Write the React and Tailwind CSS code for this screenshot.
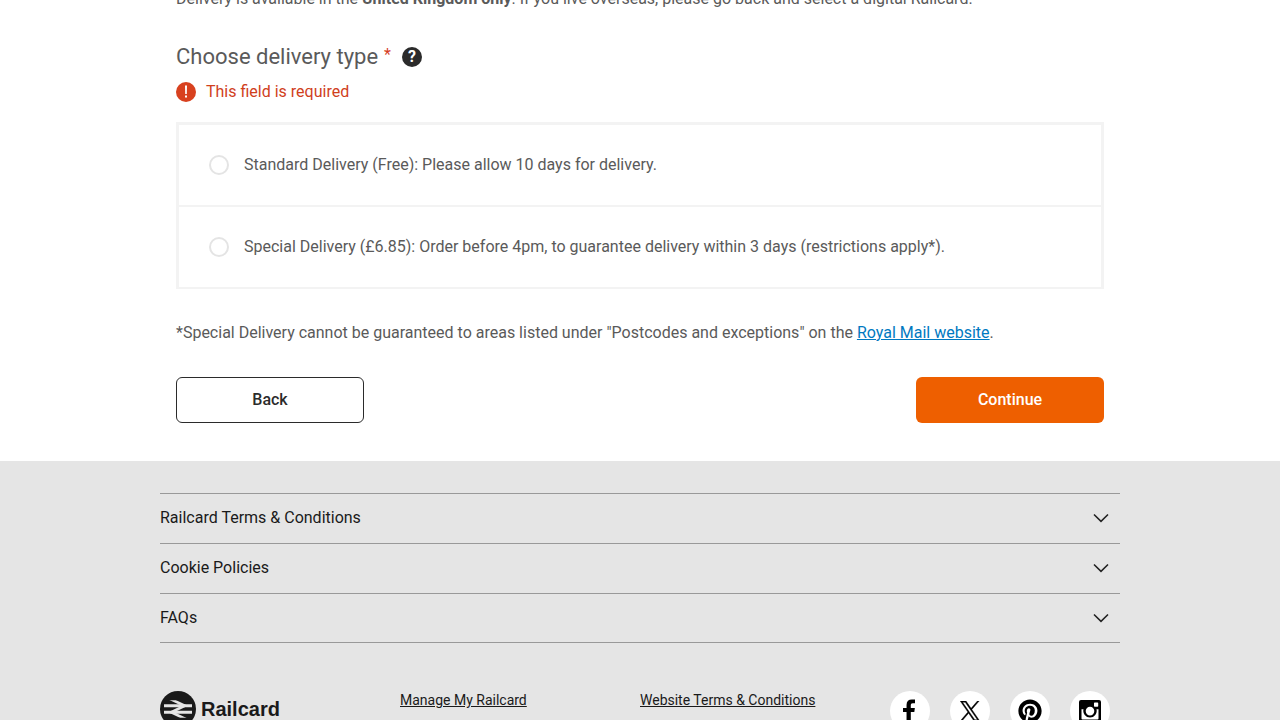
import React from "react";
import { FaPinterest } from "react-icons/fa6";

const deliveryOptions = [
  { id: "standard", label: "Standard Delivery (Free): Please allow 10 days for delivery." },
  {
    id: "special",
    label:
      "Special Delivery (£6.85): Order before 4pm, to guarantee delivery within 3 days (restrictions apply*).",
  },
];

const footerSections = ["Railcard Terms & Conditions", "Cookie Policies", "FAQs"];

function FacebookIcon() {
  return (
    <svg viewBox="95 0 864 1664" className="mr-[2px] h-6 w-3" aria-hidden="true">
      <path
        fill="currentColor"
        d="M959 12v264h-157q-86 0-116 36t-30 108v189h293l-39 296h-254v759h-306v-759h-255v-296h255v-218q0-186 104-288.500t277-102.500q147 0 228 12z"
      />
    </svg>
  );
}

function XIcon() {
  return (
    <svg viewBox="0 0 1200 1227" className="size-5" aria-hidden="true">
      <path
        fill="currentColor"
        stroke="currentColor"
        strokeWidth="24"
        d="M714.163 519.284L1160.890 0H1055.030L667.137 450.887L357.328 0H0L468.492 681.821L0 1226.370H105.866L515.491 750.218L842.672 1226.370H1200L714.137 519.284H714.163ZM569.165 687.828L521.697 619.934L144.011 79.694H306.615L611.412 515.685L658.880 583.579L1055.080 1150.300H892.476L569.165 687.854V687.828Z"
      />
    </svg>
  );
}

function InstagramIcon() {
  return (
    <svg viewBox="0 0 22 22" className="size-[22px]" aria-hidden="true">
      <path
        fill="currentColor"
        fillRule="evenodd"
        d="M2 0h18A2 2 0 0 1 22 2v18a2 2 0 0 1-2 2H2A2 2 0 0 1 0 20V2A2 2 0 0 1 2 0ZM15.700 2.500a.7.7 0 0 0-.7.7v2.800a.7.7 0 0 0 .7.7h2.800a.7.7 0 0 0 .7-.7V3.200a.7.7 0 0 0-.7-.7ZM2.500 9.300v9.200a1 1 0 0 0 1 1h15a1 1 0 0 0 1-1V9.300h-2a6.700 6.700 0 1 1-13 0ZM11 6.800a4.300 4.300 0 1 0 0 8.600a4.300 4.300 0 0 0 0-8.600Z"
      />
    </svg>
  );
}

const socials = [
  { name: "Facebook", icon: <FacebookIcon /> },
  { name: "X", icon: <XIcon /> },
  { name: "Pinterest", icon: <FaPinterest className="size-6" /> },
  { name: "Instagram", icon: <InstagramIcon /> },
];

function Chevron() {
  return (
    <svg viewBox="0 0 16 10" className="h-[10px] w-4" fill="none" stroke="#222" strokeWidth="1.6" aria-hidden="true">
      <path d="M1 1.500 8 8.300 15 1.500" />
    </svg>
  );
}

function RailcardLogo() {
  return (
    <a href="#home" className="flex items-center gap-[5px] text-[#1a1a1a]">
      <svg viewBox="0 0 36 36" className="size-9" aria-hidden="true">
        <circle cx="18" cy="18" r="18" fill="currentColor" />
        <svg x="4" y="9.200" width="28" height="17.600" viewBox="0 0 62 39">
          <g fill="none" stroke="#e5e5e5">
            <path strokeWidth="6" d="M1-8.900 46 12.400 16 26.600 61 47.900" />
            <path strokeWidth="6.400" d="M0 12.400H62M62 26.600H0" />
          </g>
        </svg>
      </svg>
      <span className="font-['Liberation_Sans',sans-serif] text-xl font-bold">Railcard</span>
    </a>
  );
}

export default function App() {
  return (
    <div className="h-screen overflow-hidden bg-white font-[Roboto,sans-serif] text-base text-[#5a5a5a]">
      <main className="mx-auto -mt-[13px] max-w-[960px] px-4 pb-[38px]">
        <p>
          Delivery is available in the <strong>United Kingdom only</strong>. If you live overseas, please go back and
          select a digital Railcard.
        </p>

        <form onSubmit={(event) => event.preventDefault()}>
          <fieldset>
            <legend className="sr-only">Delivery type</legend>
            <div className="mt-[30px] flex h-8 items-center">
              <h2 className="flex gap-[6px] text-[22px] leading-8">
                Choose delivery type <span className="text-base leading-7 text-[#d63e1f]">*</span>
              </h2>
              <button
                type="button"
                aria-label="Help"
                className="mb-px ml-[11px] flex size-5 items-center justify-center rounded-full bg-[#2b2b2b] text-base leading-5 font-bold text-white"
              >
                ?
              </button>
            </div>

            <p role="alert" className="mt-[7px] flex items-center gap-[10px] text-[#d0401c]">
              <svg viewBox="0 0 20 20" className="size-5" aria-hidden="true">
                <circle cx="10" cy="10" r="10" fill="#d8411f" />
                <path fill="#fff" d="M9 3.500h2l-.2 8.500H9.200ZM9 13.500h2v2H9Z" />
              </svg>
              This field is required
            </p>

            <div className="mt-[18px] divide-y-2 divide-[#f3f3f3] border-3 border-b-2 border-[#f3f3f3]">
              {deliveryOptions.map((option) => (
                <label key={option.id} htmlFor={option.id} className="flex items-center gap-[15px] px-[30px] py-7">
                  <input
                    id={option.id}
                    type="radio"
                    name="delivery"
                    className="size-5 shrink-0 appearance-none rounded-full border-2 border-[#e4e4e4] bg-white checked:border-[6px] checked:border-[#ee5f00]"
                  />
                  {option.label}
                </label>
              ))}
            </div>
          </fieldset>

          <p className="mt-8">
            *Special Delivery cannot be guaranteed to areas listed under "Postcodes and exceptions" on the{" "}
            <a href="#royal-mail" className="text-[#0079c1] underline">
              Royal Mail website
            </a>
            .
          </p>

          <div className="mt-8 flex justify-between">
            <button
              type="button"
              className="h-[46px] w-[188px] rounded-md border border-[#2b2b2b] bg-white font-medium text-[#2b2b2b]"
            >
              Back
            </button>
            <button type="submit" className="h-[46px] w-[188px] rounded-md bg-[#ee5f00] font-medium text-white">
              Continue
            </button>
          </div>
        </form>
      </main>

      <footer className="bg-[#e5e5e5] pt-8 pb-16 text-[#1a1a1a]">
        <div className="mx-auto max-w-[960px]">
          <ul>
            {footerSections.map((title) => (
              <li key={title} className="h-[50px] border-t border-[#999] last:border-b">
                <button type="button" className="flex h-12 w-full items-center justify-between pr-[11px] text-left">
                  {title}
                  <Chevron />
                </button>
              </li>
            ))}
          </ul>

          <div className="mt-12 grid grid-cols-4 items-start text-sm leading-[18px]">
            <RailcardLogo />
            <a href="#manage" className="underline">
              Manage My Railcard
            </a>
            <a href="#terms" className="underline">
              Website Terms &amp; Conditions
            </a>
            <div className="flex gap-5 pl-[10px]">
              {socials.map((social) => (
                <a
                  key={social.name}
                  href={"#" + social.name.toLowerCase()}
                  aria-label={social.name}
                  className="flex size-10 items-center justify-center rounded-full bg-white text-black"
                >
                  {social.icon}
                </a>
              ))}
            </div>
          </div>
        </div>
      </footer>
    </div>
  );
}
